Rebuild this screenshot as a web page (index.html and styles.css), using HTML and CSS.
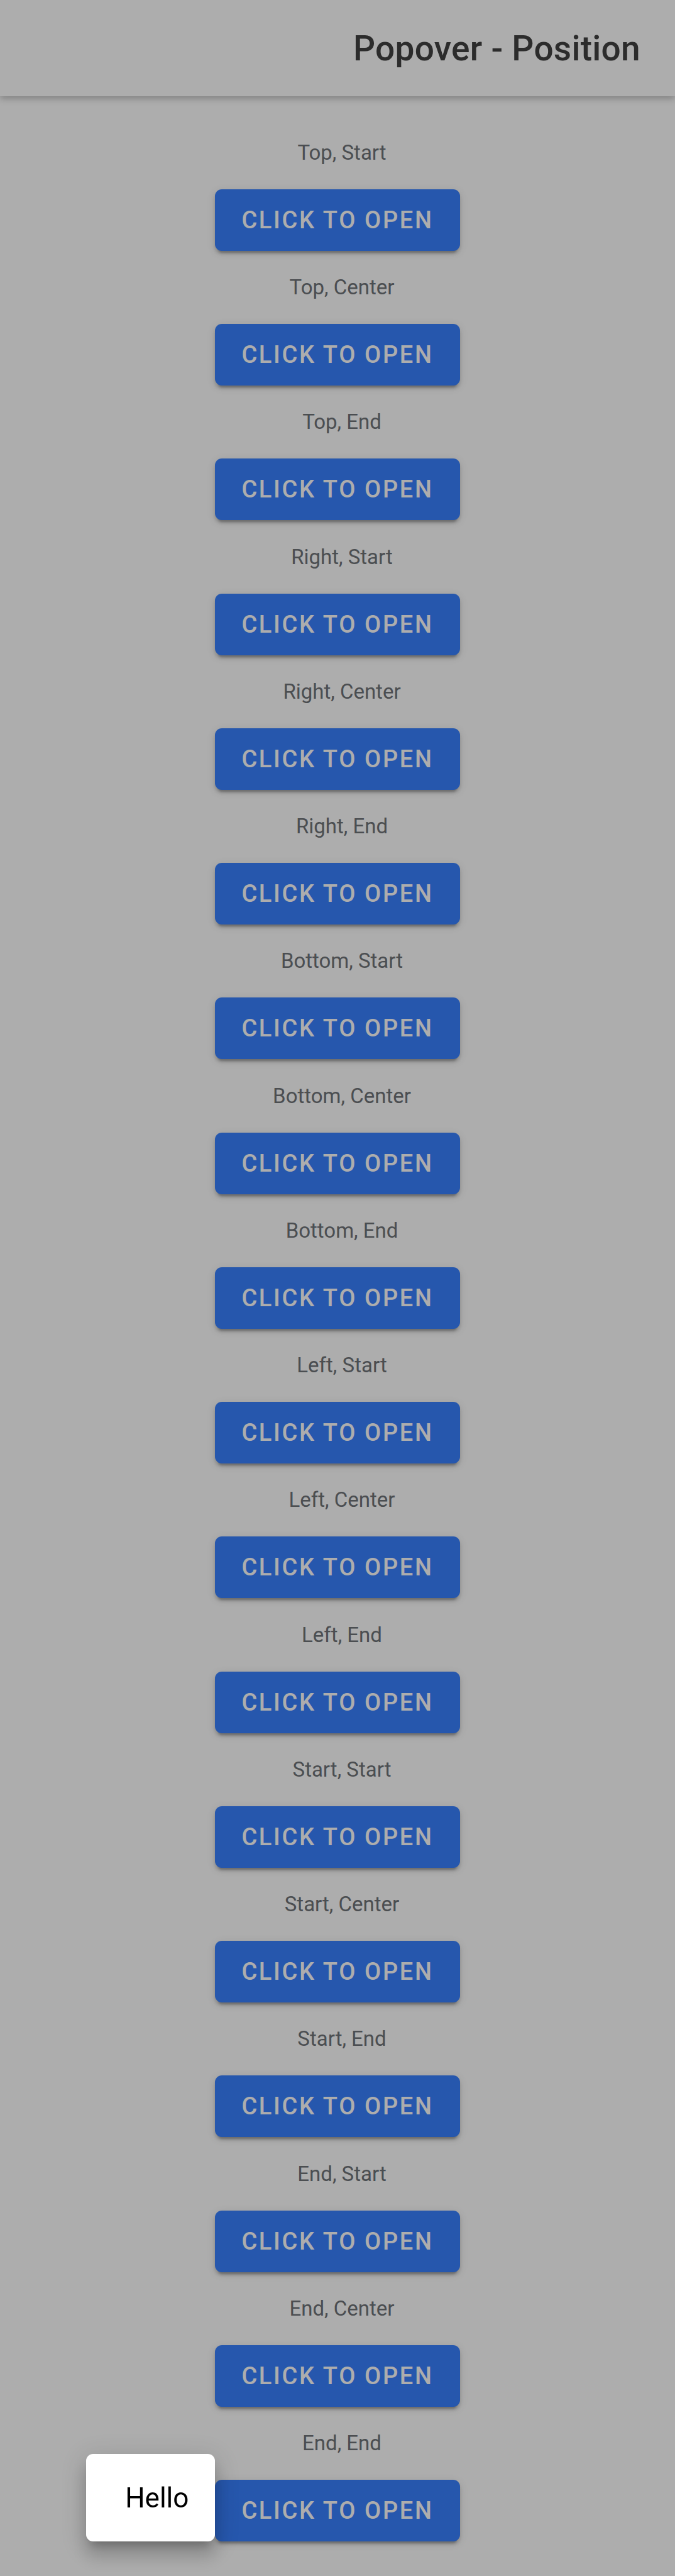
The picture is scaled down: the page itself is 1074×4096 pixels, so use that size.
FILE: index.html
```html
<!DOCTYPE html>
<html lang="en">
<head>
<meta charset="utf-8">
<meta name="viewport" content="width=device-width, initial-scale=1">
<title>Popover - Position</title>
<link rel="stylesheet" href="styles.css">
</head>
<body>
<header class="toolbar"><h1 class="toolbar-title">Popover - Position</h1></header>
<main class="positions">
<section class="position"><h2 class="label">Top, Start</h2><button class="button" type="button">Click to open</button></section>
<section class="position"><h2 class="label">Top, Center</h2><button class="button" type="button">Click to open</button></section>
<section class="position"><h2 class="label">Top, End</h2><button class="button" type="button">Click to open</button></section>
<section class="position"><h2 class="label">Right, Start</h2><button class="button" type="button">Click to open</button></section>
<section class="position"><h2 class="label">Right, Center</h2><button class="button" type="button">Click to open</button></section>
<section class="position"><h2 class="label">Right, End</h2><button class="button" type="button">Click to open</button></section>
<section class="position"><h2 class="label">Bottom, Start</h2><button class="button" type="button">Click to open</button></section>
<section class="position"><h2 class="label">Bottom, Center</h2><button class="button" type="button">Click to open</button></section>
<section class="position"><h2 class="label">Bottom, End</h2><button class="button" type="button">Click to open</button></section>
<section class="position"><h2 class="label">Left, Start</h2><button class="button" type="button">Click to open</button></section>
<section class="position"><h2 class="label">Left, Center</h2><button class="button" type="button">Click to open</button></section>
<section class="position"><h2 class="label">Left, End</h2><button class="button" type="button">Click to open</button></section>
<section class="position"><h2 class="label">Start, Start</h2><button class="button" type="button">Click to open</button></section>
<section class="position"><h2 class="label">Start, Center</h2><button class="button" type="button">Click to open</button></section>
<section class="position"><h2 class="label">Start, End</h2><button class="button" type="button">Click to open</button></section>
<section class="position"><h2 class="label">End, Start</h2><button class="button" type="button">Click to open</button></section>
<section class="position"><h2 class="label">End, Center</h2><button class="button" type="button">Click to open</button></section>
<section class="position"><h2 class="label">End, End</h2>
<div class="anchor"><button class="button" type="button">Click to open</button><div class="popover" role="dialog" aria-label="Hello">Hello</div></div></section>
</main>
<div class="backdrop"></div>
</body>
</html>
```
FILE: styles.css
```css
* {
  box-sizing: border-box;
}

body {
  display: flex;
  flex-direction: column;
  min-height: 100vh;
  margin: 0;
  background: #fff;
  font-family: Roboto, "Noto Sans", sans-serif;
}

.toolbar {
  display: flex;
  align-items: center;
  justify-content: flex-end;
  min-height: 153px;
  padding: 0 55px;
  box-shadow: 0 4px 10px rgba(0, 0, 0, 0.25);
}

.toolbar-title {
  margin: 0;
  color: #424242;
  font-size: 55px;
  font-weight: 500;
  line-height: 64px;
  letter-spacing: 0.005em;
}

.positions {
  display: flex;
  flex: 1;
  flex-direction: column;
  align-items: center;
  justify-content: space-between;
  gap: 16px;
  padding: 70px 16px 55px;
}

.position {
  display: flex;
  flex-direction: column;
  align-items: center;
  gap: 38px;
}

.label {
  margin: 0;
  padding-left: 14px;
  color: #6f7378;
  font-size: 33px;
  font-weight: 400;
  line-height: 40px;
}

.anchor {
  position: relative;
}

.button {
  display: block;
  height: 98px;
  padding: 0 42px;
  border: 0;
  border-radius: 11px;
  background: #3880ff;
  color: #fff;
  font: 500 38px/44px Roboto, "Noto Sans", sans-serif;
  letter-spacing: 0.07em;
  text-transform: uppercase;
  box-shadow: 0 8px 3px -5px rgba(0, 0, 0, 0.2), 0 5px 5px rgba(0, 0, 0, 0.14), 0 3px 14px rgba(0, 0, 0, 0.12);
}

.backdrop {
  position: fixed;
  inset: 0;
  z-index: 1;
  background: rgba(0, 0, 0, 0.32);
}

.popover {
  position: absolute;
  right: 100%;
  bottom: 0;
  z-index: 2;
  padding: 44px 42px 43px 62px;
  border-radius: 11px;
  background: #fff;
  color: #000;
  font-size: 44px;
  line-height: 52px;
  box-shadow: 0 14px 14px -8px rgba(0, 0, 0, 0.2), 0 22px 27px 3px rgba(0, 0, 0, 0.14), 0 8px 38px 5px rgba(0, 0, 0, 0.12);
}
```
